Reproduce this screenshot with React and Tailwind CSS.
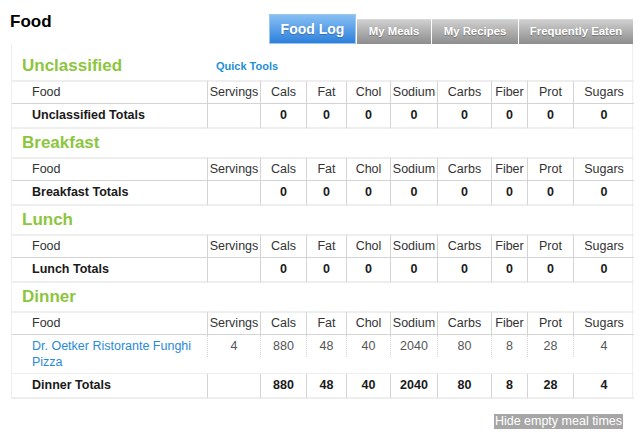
import React from "react";

const cols = ["Servings", "Cals", "Fat", "Chol", "Sodium", "Carbs", "Fiber", "Prot", "Sugars"];
const widths = ["w-[195px]", "w-[53px]", "w-[46px]", "w-[40px]", "w-[44px]", "w-[47px]", "w-[54px]", "w-[36px]", "w-[46px]", "w-[61px]"];

const meals = [
    { name: "Unclassified", quick: true, items: [], totals: ["", "0", "0", "0", "0", "0", "0", "0", "0"] },
    { name: "Breakfast", items: [], totals: ["", "0", "0", "0", "0", "0", "0", "0", "0"] },
    { name: "Lunch", items: [], totals: ["", "0", "0", "0", "0", "0", "0", "0", "0"] },
    {
        name: "Dinner",
        items: [{ food: "Dr. Oetker Ristorante Funghi Pizza", values: ["4", "880", "48", "40", "2040", "80", "8", "28", "4"] }],
        totals: ["", "880", "48", "40", "2040", "80", "8", "28", "4"],
    },
];

function Tab({ label }) {
    return (
        <div className="flex h-[30px] w-[87px] items-center justify-center border border-[#9cc8f0] bg-gradient-to-b from-[#86bff3] to-[#2b80dc] text-[14px] font-bold text-white [text-shadow:0_1px_1px_rgba(0,0,0,0.25)]">
            {label}
        </div>
    );
}

function GrayTab({ label, w }) {
    return (
        <div className={`flex h-[25px] ${w} items-center justify-center border-t border-[#d8d8d8] bg-gradient-to-b from-[#cfcfcf] to-[#8d8d8d] text-[11.4px] font-bold text-white [text-shadow:0_1px_1px_rgba(0,0,0,0.3)]`}>
            {label}
        </div>
    );
}

function MealSection({ meal, first }) {
    return (
        <>
            {/* Meal title */}
            <tr>
                <td colSpan={10} className={first ? "h-[36px] pt-[8px] align-middle" : "h-[28px] align-middle"}>
                    <div className="flex items-center pl-[10px]">
                        <span className="w-[194px] text-[17px] font-bold leading-[20px] text-[#8cc63e]">{meal.name}</span>
                        {meal.quick && <span className="text-[11px] font-bold text-[#1e8fd6]">Quick Tools</span>}
                    </div>
                </td>
            </tr>
            {/* Column header */}
            <tr className="text-[12.5px] text-[#333]">
                <td className="h-[24px] border-t-2 border-b border-t-[#eeeeee] border-b-[#d4d4d4] border-b-dotted pl-[20px]">Food</td>
                {cols.map((c) => (
                    <td key={c} className="h-[24px] border-t-2 border-b border-l border-t-[#eeeeee] border-b-[#d4d4d4] border-l-[#d4d4d4] border-b-dotted border-l-dotted text-center">
                        {c}
                    </td>
                ))}
            </tr>
            {/* Foods */}
            {meal.items.map((item) => (
                <tr key={item.food} className="text-[12.5px]">
                    <td className="h-[39px] border-b border-[#eeeeee] pl-[20px] pr-2 pt-[3px] align-top leading-[16px] text-[#2a8ad8]">
                        {item.food}
                    </td>
                    {item.values.map((v, i) => (
                        <td key={i} className="border-b border-[#eeeeee] align-top">
                            <div className="flex h-[22px] items-center justify-center border-l border-dotted border-[#d4d4d4] text-[#555]">{v}</div>
                        </td>
                    ))}
                </tr>
            ))}
            {/* Totals */}
            <tr className="text-[12.5px] font-bold text-[#1a1a1a]">
                <td className="h-[25px] border-b-2 border-[#eeeeee] pl-[20px]">{meal.name} Totals</td>
                {meal.totals.map((v, i) => (
                    <td key={i} className="h-[25px] border-b-2 border-l border-b-[#eeeeee] border-l-[#d4d4d4] border-l-dotted text-center">
                        {v}
                    </td>
                ))}
            </tr>
        </>
    );
}

export default function App() {
    return (
        <div className="min-h-[443px] w-[640px] bg-white font-['Liberation_Sans',Arial,sans-serif]">
            {/* Top bar with tabs */}
            <div className="flex h-[44px] w-[633px] items-end justify-between">
                <h1 className="self-start pl-[10px] pt-[12px] text-[17px] font-bold leading-[20px] text-black">Food</h1>
                <div className="flex items-end gap-px">
                    <Tab label="Food Log" />
                    <GrayTab label="My Meals" w="w-[74px]" />
                    <GrayTab label="My Recipes" w="w-[86px]" />
                    <GrayTab label="Frequently Eaten" w="w-[114px]" />
                </div>
            </div>

            {/* Food diary */}
            <div className="ml-[11px] w-[622px] border-x border-[#eeeeee]">
                <table className="w-full table-fixed border-separate border-spacing-0">
                    <colgroup>
                        {widths.map((w, i) => (
                            <col key={i} className={w} />
                        ))}
                    </colgroup>
                    <tbody>
                        {meals.map((m, i) => (
                            <MealSection key={m.name} meal={m} first={i === 0} />
                        ))}
                    </tbody>
                </table>
            </div>

            <div className="mt-[15px] flex w-[623px] justify-end">
                <span className="bg-[#a6a6a6] px-px text-[12.5px] leading-[15px] text-white">Hide empty meal times</span>
            </div>
        </div>
    );
}
